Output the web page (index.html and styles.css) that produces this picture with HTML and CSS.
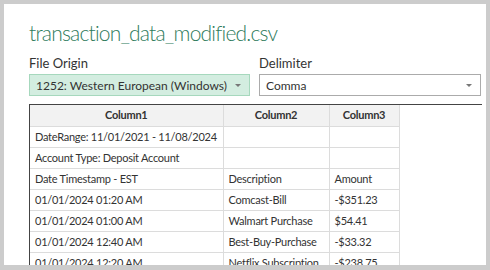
FILE: index.html
```html
<!doctype html>
<html>
<head>
<meta charset="utf-8" />
<title>transaction_data_modified.csv</title>
<link rel="stylesheet" href="styles.css">
</head>
<body>
<div class="dialog">
	<h1 class="title">transaction_data_modified.csv</h1>
	<div class="options">
		<div class="field origin">
			<label>File Origin</label>
			<div class="select green"><span>1252: Western European (Windows)</span><i class="arrow"></i></div>
		</div>
		<div class="field delim">
			<label>Delimiter</label>
			<div class="select"><span>Comma</span><i class="arrow"></i></div>
		</div>
	</div>
	<div class="preview">
		<table>
			<tr><th class="c1">Column1</th><th class="c2">Column2</th><th class="c3">Column3</th></tr>
			<tr><td>DateRange: 11/01/2021 - 11/08/2024</td><td></td><td></td></tr>
			<tr><td>Account Type: Deposit Account</td><td></td><td></td></tr>
			<tr><td>Date Timestamp - EST</td><td>Description</td><td>Amount</td></tr>
			<tr><td>01/01/2024 01:20 AM</td><td>Comcast-Bill</td><td>-$351.23</td></tr>
			<tr><td>01/01/2024 01:00 AM</td><td>Walmart Purchase</td><td>$54.41</td></tr>
			<tr><td>01/01/2024 12:40 AM</td><td>Best-Buy-Purchase</td><td>-$33.32</td></tr>
			<tr><td>01/01/2024 12:20 AM</td><td>Netflix Subscription</td><td>-$238.75</td></tr>
		</table>
	</div>
</div>
</body>
</html>
```

FILE: styles.css
```css
*{margin: 0;padding: 0;box-sizing: border-box;}
html,body{height: 100%;}
body{background: #cccccc;padding: 4px 4px 5px 4px;font-family: "Lato","Noto Sans",sans-serif;color: #333;}
.dialog{background: white;height: 100%;overflow: hidden;padding: 0 5px 0 25px;}
.title{font-family: "Lato","Open Sans",sans-serif;font-weight: 300;font-size: 21px;letter-spacing: -0.8px;color: #2e7b5c;line-height: 28px;padding-top: 15px;white-space: nowrap;}
.options{display: flex;gap: 9px;margin-top: 8px;}
.field{display: flex;flex-direction: column;}
.field.origin{width: 221px;}
.field.delim{width: 222px;}
label{font-size: 13px;line-height: 16px;color: #333;margin-bottom: 3px;}
.select{height: 22px;border: 1px solid #ababab;display: flex;align-items: center;justify-content: space-between;padding: 0 8px 0 6px;font-size: 12px;white-space: nowrap;}
.select.green{background: #d3ede0;border-color: #a6d8bd;}
.arrow{width: 0;height: 0;border-left: 3px solid transparent;border-right: 3px solid transparent;border-top: 3px solid #777;}
.preview{margin-top: 8px;border-top: 1px solid #444;border-left: 1px solid #444;width: 453px;height: 200px;}
table{border-collapse: collapse;font-size: 11px;letter-spacing: -0.25px;table-layout: fixed;width: 369px;}
th,td{height: 21px;line-height: 14px;border-right: 1px solid #dcdcdc;border-bottom: 1px solid #dcdcdc;padding: 0 5px;text-align: left;white-space: nowrap;overflow: hidden;}
th{background: #f2f2f2;font-weight: bold;text-align: center;}
.c1{width: 193px;}
.c2{width: 106px;}
.c3{width: 70px;}
```
